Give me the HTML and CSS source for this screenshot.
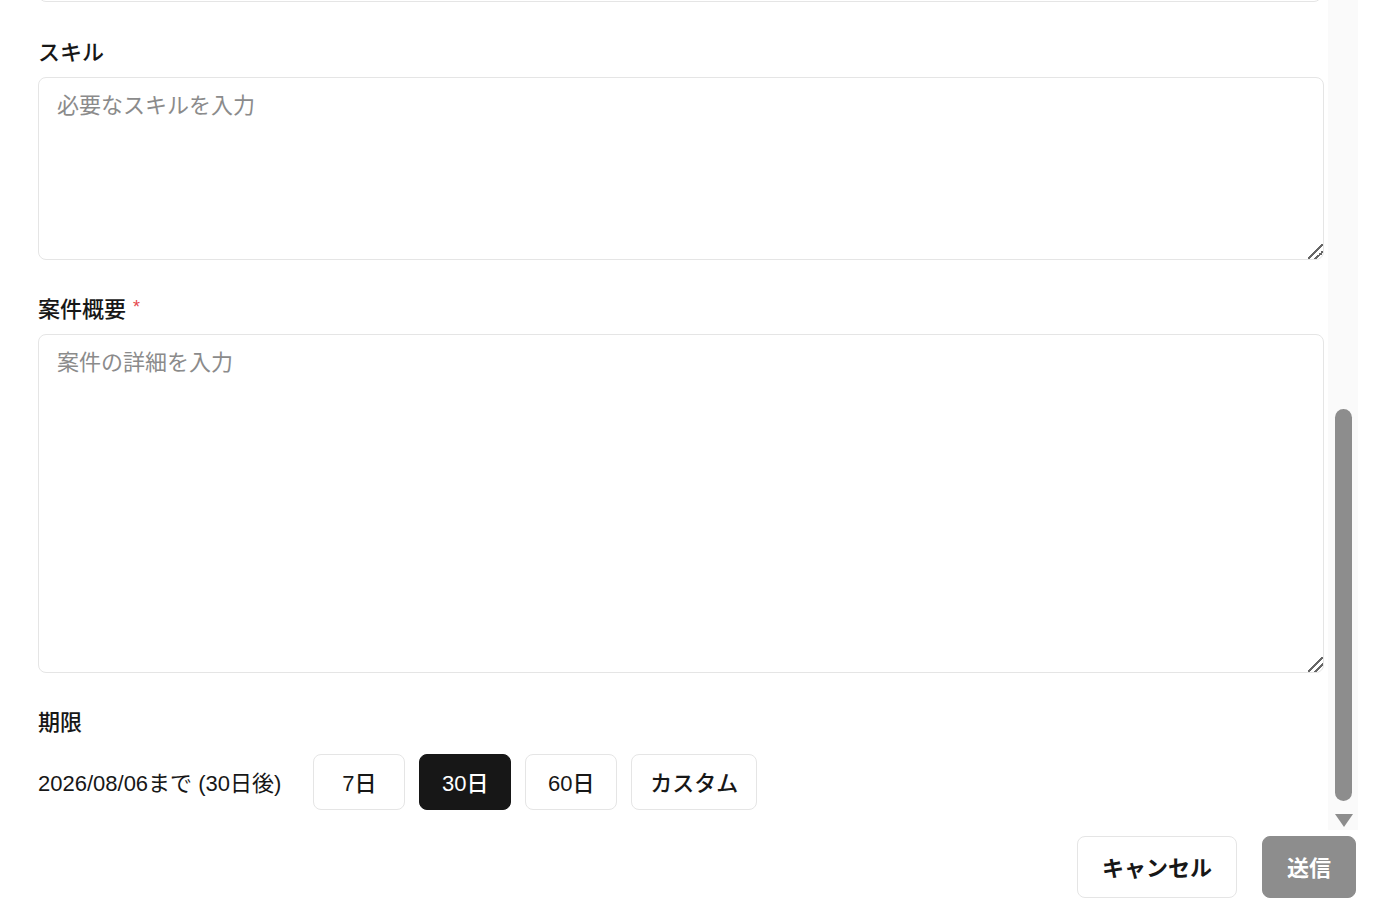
FILE: index.html
```html
<!DOCTYPE html>
<html lang="ja">
<head>
    <meta charset="UTF-8">
    <title>案件登録</title>
    <link rel="stylesheet" href="styles.css">
</head>
<body>
    <div class="modal">
        <div class="scroll">
            <div class="form">
                <div class="prev-input"></div>

                <div class="field field-first">
                    <label class="label">スキル</label>
                    <textarea class="textarea skills" placeholder="必要なスキルを入力"></textarea>
                </div>

                <div class="field">
                    <label class="label">案件概要<span class="req">*</span></label>
                    <textarea class="textarea summary" placeholder="案件の詳細を入力"></textarea>
                </div>

                <div class="field">
                    <label class="label label-deadline">期限</label>
                    <div class="deadline">
                        <span class="deadline-text">2026/08/06まで (30日後)</span>
                        <button class="chip">7日</button>
                        <button class="chip chip-active">30日</button>
                        <button class="chip">60日</button>
                        <button class="chip">カスタム</button>
                    </div>
                </div>
            </div>
            <div class="scrollbar">
                <div class="track">
                    <div class="thumb"></div>
                </div>
                <div class="arrow"></div>
            </div>
        </div>
        <div class="footer">
            <button class="btn btn-cancel">キャンセル</button>
            <button class="btn btn-submit">送信</button>
        </div>
    </div>
</body>
</html>
```

FILE: styles.css
```css
body {
    margin: 0;
    background-color: #fff;
    font-family: "Liberation Sans", "Noto Sans CJK JP", sans-serif;
    color: #171717;
}
.modal {
    width: 1358px;
}
.scroll {
    display: flex;
    height: 830px;
    overflow: hidden;
}
.form {
    flex: 1;
    padding: 0 4px 20px 38px;
}
.prev-input {
    height: 56px;
    margin-top: -56px;
    margin-right: 2px;
    border: 1px solid #e5e5e5;
    border-radius: 8px;
}
.field {
    margin-top: 33px;
}
.field-first {
    margin-top: 34px;
}
.label {
    display: block;
    height: 33px;
    margin-bottom: 8px;
    font-size: 22px;
    line-height: 33px;
    font-weight: 500;
}
.label-deadline {
    margin-bottom: 15px;
}
.req {
    position: relative;
    top: -4px;
    margin-left: 7px;
    color: #e5484d;
    font-size: 18px;
    line-height: 1;
}
.textarea {
    display: block;
    box-sizing: border-box;
    width: 100%;
    padding: 11px 18px 9px;
    border: 1px solid #e5e5e5;
    border-radius: 8px;
    font-family: inherit;
    font-size: 22px;
    line-height: 33px;
    color: #171717;
    resize: vertical;
    outline: none;
}
.textarea::placeholder {
    color: #8b8b8b;
}
.textarea::-webkit-resizer {
    width: 16px;
    height: 16px;
    background: linear-gradient(135deg, transparent 46%, #666 46%, #666 56%, transparent 56%, transparent 70%, #666 70%, #666 80%, transparent 80%);
}
.skills {
    height: 183px;
}
.summary {
    height: 339px;
}
.deadline {
    display: flex;
    align-items: center;
    gap: 14px;
}
.deadline-text {
    margin-right: 18px;
    padding-bottom: 3px;
    font-size: 22px;
}
.chip {
    box-sizing: border-box;
    min-width: 92px;
    height: 56px;
    padding: 0 18px 3px;
    border: 1px solid #e5e5e5;
    border-radius: 8px;
    background-color: #fff;
    font-family: inherit;
    font-size: 22px;
    font-weight: 500;
    color: #171717;
}
.chip-active {
    background-color: #171717;
    border-color: #171717;
    color: #fff;
}
.scrollbar {
    width: 30px;
    background-color: #fafafa;
    display: flex;
    flex-direction: column;
    align-items: center;
}
.track {
    flex: 1;
    display: flex;
    flex-direction: column;
    justify-content: flex-end;
    padding-bottom: 13px;
}
.thumb {
    width: 17px;
    height: 392px;
    margin-left: 1px;
    border-radius: 9px;
    background-color: #8d8d8d;
}
.arrow {
    width: 0;
    height: 0;
    margin: 0 0 3px 2px;
    border-left: 9px solid transparent;
    border-right: 9px solid transparent;
    border-top: 13px solid #8d8d8d;
}
.footer {
    display: flex;
    justify-content: flex-end;
    gap: 25px;
    padding: 6px 2px 0 0;
}
.btn {
    box-sizing: border-box;
    height: 62px;
    padding: 0 24px 3px;
    border: 1px solid #e5e5e5;
    border-radius: 8px;
    font-family: inherit;
    font-size: 22px;
    font-weight: 700;
}
.btn-cancel {
    background-color: #fff;
    color: #171717;
}
.btn-submit {
    background-color: #8d8d8d;
    border-color: #8d8d8d;
    color: #fff;
}
```
